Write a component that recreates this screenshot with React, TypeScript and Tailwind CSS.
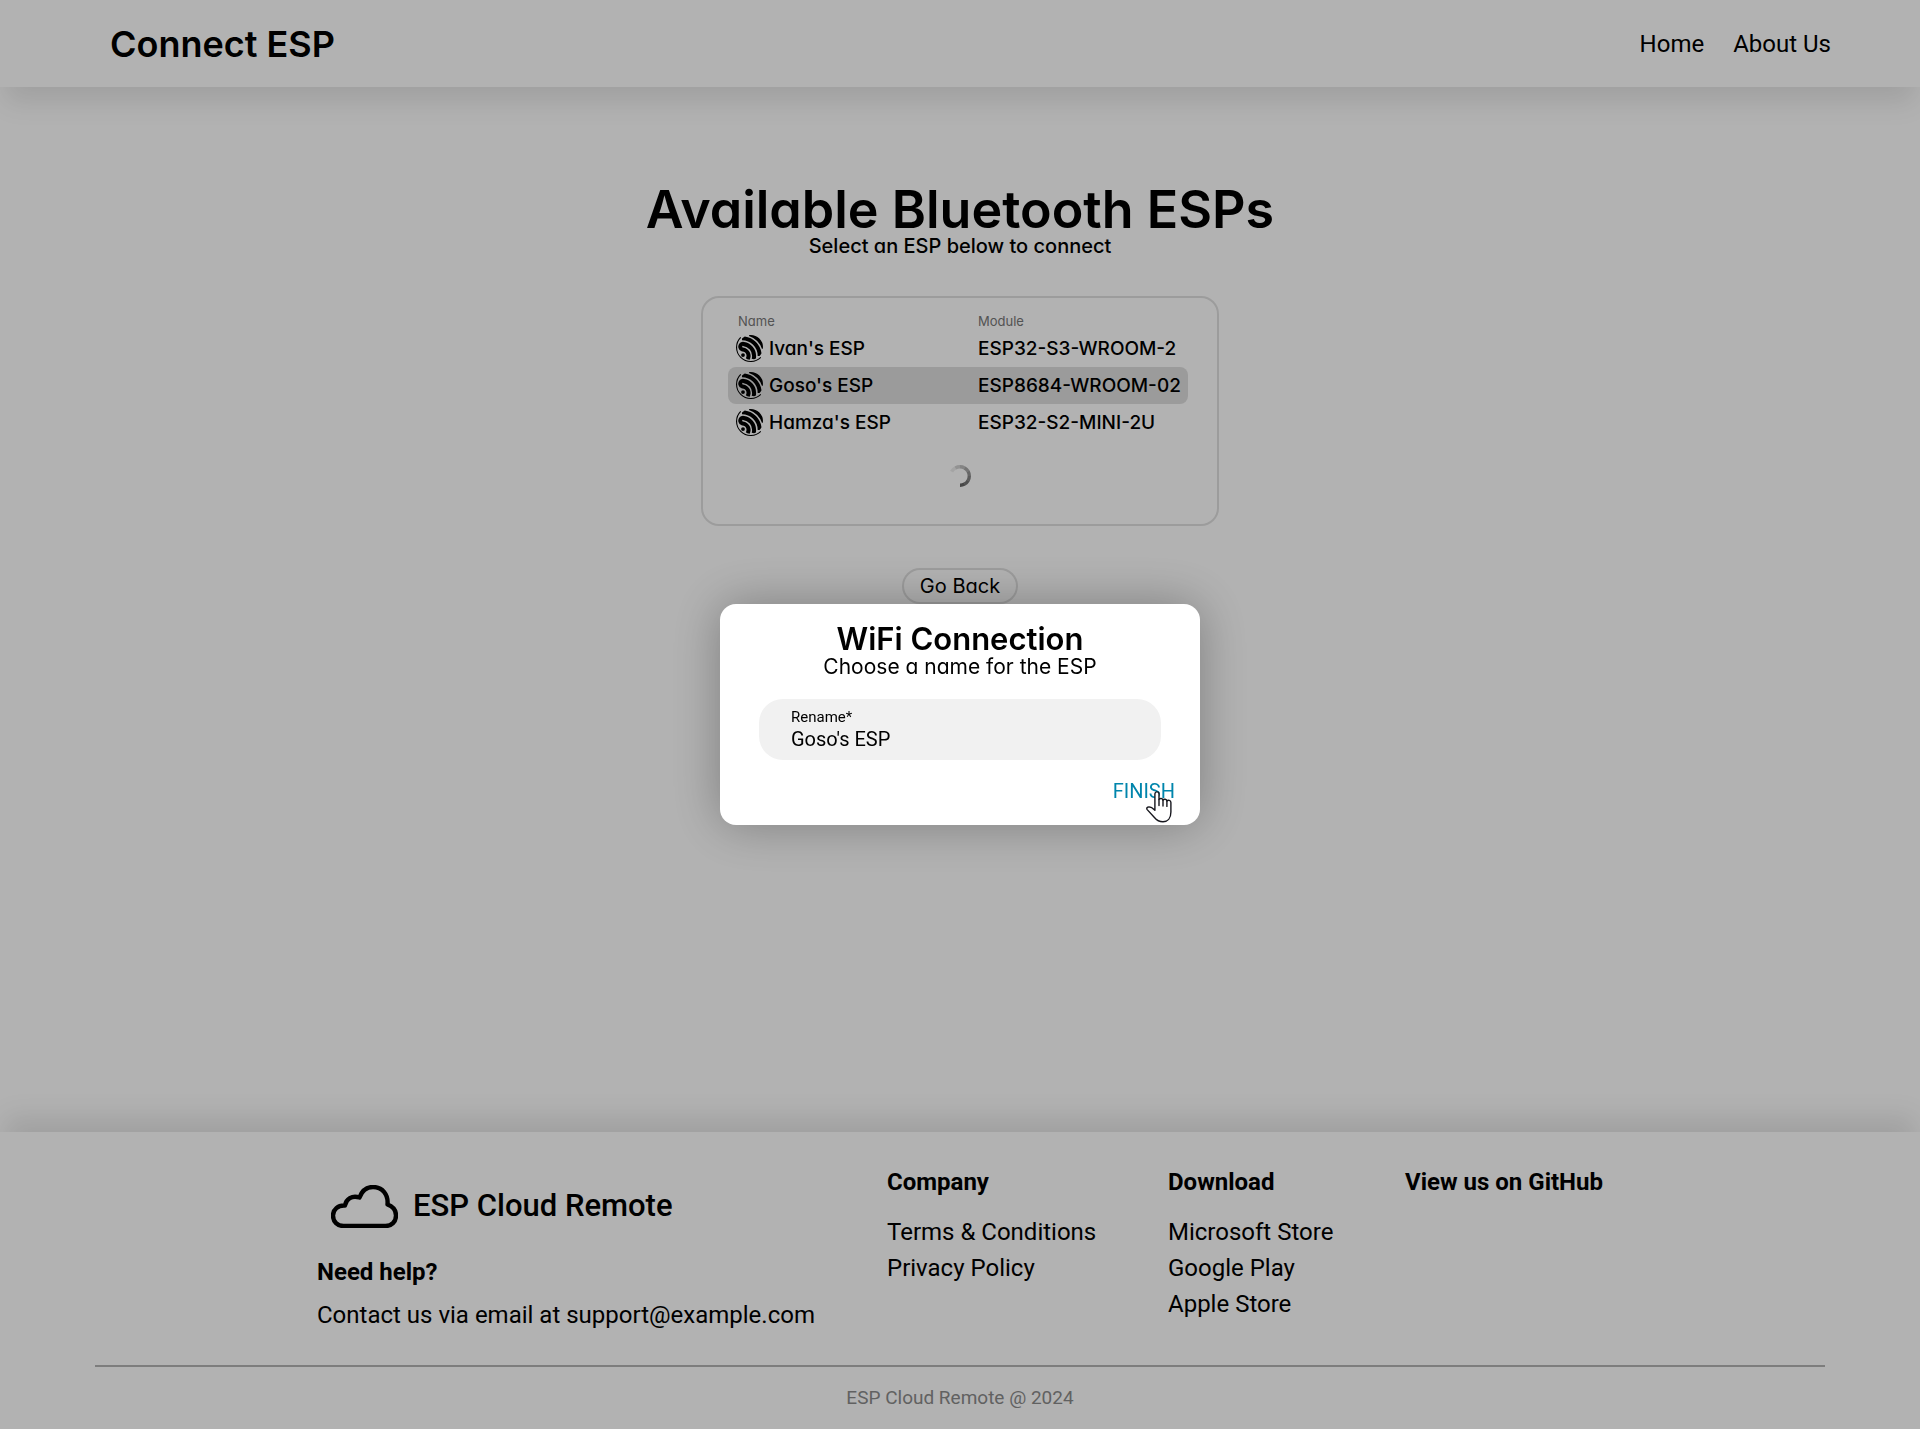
import { SiEspressif } from "react-icons/si";

const display =
  "font-['Inter','Open_Sans',sans-serif] [font-feature-settings:'cv11']";

const devices = [
  { name: "Ivan's ESP", module: "ESP32-S3-WROOM-2", selected: false },
  { name: "Goso's ESP", module: "ESP8684-WROOM-02", selected: true },
  { name: "Hamza's ESP", module: "ESP32-S2-MINI-2U", selected: false },
];

const linkColumns = [
  {
    title: "Company",
    links: ["Terms & Conditions", "Privacy Policy"],
  },
  {
    title: "Download",
    links: ["Microsoft Store", "Google Play", "Apple Store"],
  },
  { title: "View us on GitHub", links: [] as string[] },
];

function CloudLogo() {
  return (
    <svg viewBox="0 0 67 43" className="h-[43px] w-[67px]" aria-hidden="true">
      <path
        d="M12.5 41C6.5 41 2 37 2 30.5C2 24.5 7 20 14 20.5C15 14 21 10 28.5 12.5C31 5.5 36 2 42 2C51 2 57.5 9 56.5 19.5C62 21.5 65 25.5 65 30.5C65 37 60.5 41 54.5 41Z"
        fill="none"
        stroke="#000"
        strokeWidth="4.4"
        strokeLinejoin="round"
      />
    </svg>
  );
}

function HandCursor() {
  return (
    <svg
      viewBox="0 0 26 32"
      className="pointer-events-none absolute top-[15px] left-[33px] h-8 w-[26px]"
      aria-hidden="true"
    >
      <path
        d="M8.9 19.2V3C8.9 0.2 13 0.2 13 3V8.6C13.6 7 16.8 7.2 17 9.2C17.8 7.7 20.6 8 20.9 10C22 8.7 24.9 9.2 24.9 11.6V21C24.9 27.5 21.5 30.8 17 30.8C12.5 30.8 10.5 29 8.2 26.2L1.2 18.6C0.2 17.2 1.2 16 3 15.9C5.2 15.9 7.2 17.6 8.9 19.2Z"
        fill="#fff"
        stroke="#16161d"
        strokeWidth="1.4"
        strokeLinejoin="round"
      />
      <path
        d="M13 8.6V14.6M17 9.2V15M20.9 10V15.4"
        stroke="#16161d"
        strokeWidth="1.4"
        strokeLinecap="round"
      />
    </svg>
  );
}

function Header() {
  return (
    <header className="flex h-[87px] items-center justify-between bg-white pr-[89px] pl-[110px] shadow-[0_20px_25px_-5px_rgba(0,0,0,0.1)]">
      <h1 className={`${display} text-4xl leading-none font-semibold`}>
        Connect ESP
      </h1>
      <nav className="flex gap-[29px] text-2xl">
        <a href="#home">Home</a>
        <a href="#about">About Us</a>
      </nav>
    </header>
  );
}

function DeviceCard() {
  return (
    <section className="mt-10 rounded-[18px] border-2 border-[#e0e0e0] pt-[15px] pr-[29px] pb-[37px] pl-[25px]">
      <table className={`${display} w-[460px] table-fixed border-collapse text-left`}>
        <thead>
          <tr className="text-[13px] leading-[17px] text-[#777]">
            <th className="w-[242px] pl-[10px] font-normal">Name</th>
            <th className="pl-2 font-normal">Module</th>
          </tr>
        </thead>
        <tbody>
          {devices.map((d) => (
            <tr
              key={d.name}
              className={`h-[37px] text-[19px] leading-7 font-medium ${d.selected ? "bg-[#dfdfdf]" : ""}`}
            >
              <td className="rounded-l-lg pl-2">
                <span className="flex items-center gap-[6px]">
                  <SiEspressif className="size-[27px] shrink-0" />
                  {d.name}
                </span>
              </td>
              <td className="rounded-r-lg pl-2 whitespace-nowrap">{d.module}</td>
            </tr>
          ))}
        </tbody>
      </table>
      <div className="mt-6 flex justify-center pl-1" role="status" aria-label="Searching for devices">
        <svg viewBox="0 0 22 22" className="size-[22px]" fill="none" strokeWidth="3.4">
          <path d="M2.6 6.6A9.3 9.3 0 0 1 6.4 2.9" stroke="#000" strokeOpacity="0.08" />
          <path d="M6.4 2.9A9.3 9.3 0 0 1 11 1.7" stroke="#000" strokeOpacity="0.18" />
          <path d="M11 1.7A9.3 9.3 0 0 1 15.6 2.9" stroke="#000" strokeOpacity="0.26" />
          <path d="M15.6 2.9A9.3 9.3 0 0 1 19.1 6.4" stroke="#000" strokeOpacity="0.34" />
          <path d="M19.1 6.4A9.3 9.3 0 0 1 20.3 11" stroke="#000" strokeOpacity="0.42" />
          <path d="M20.3 11A9.3 9.3 0 0 1 19.1 15.6" stroke="#000" strokeOpacity="0.48" />
          <path d="M19.1 15.6A9.3 9.3 0 0 1 15.6 19.1" stroke="#000" strokeOpacity="0.54" />
          <path d="M15.6 19.1A9.3 9.3 0 0 1 11 20.3" stroke="#000" strokeOpacity="0.6" />
        </svg>
      </div>
    </section>
  );
}

function Footer() {
  return (
    <footer className="bg-white px-[95px] shadow-[0_-20px_25px_-5px_rgba(0,0,0,0.1)]">
      <div className="flex h-[233px] pl-[222px] text-2xl">
        <div className="w-[570px] pt-[50px]">
          <div className="flex items-center gap-[15px] pl-[14px]">
            <CloudLogo />
            <p className="text-[31px] leading-[48px] font-medium">
              ESP Cloud Remote
            </p>
          </div>
          <p className="mt-6 leading-9 font-bold">Need help?</p>
          <p className="mt-[7px] leading-9">
            Contact us via email at support@example.com
          </p>
        </div>
        <div className="grid grid-cols-[281px_237px_auto] pt-8">
          {linkColumns.map((c) => (
            <div key={c.title}>
              <h3 className="leading-9 font-bold">{c.title}</h3>
              <ul className="mt-[14px]">
                {c.links.map((l) => (
                  <li key={l} className="leading-9">
                    <a href="#more">{l}</a>
                  </li>
                ))}
              </ul>
            </div>
          ))}
        </div>
      </div>
      <p className="border-t-2 border-[#b4b4b4] pt-[17px] pb-[17px] text-center text-[19px] leading-7 text-[#8c8c8c]">
        ESP Cloud Remote @ 2024
      </p>
    </footer>
  );
}

function RenameDialog() {
  return (
    <div className="fixed inset-0 flex items-center justify-center bg-black/30">
      <div
        role="dialog"
        aria-labelledby="dialog-title"
        className="flex w-[480px] flex-col rounded-2xl bg-white px-[39px] pt-[17px] pb-[19px] shadow-[0_0_50px_rgba(0,0,0,0.3)]"
      >
        <div className={`${display} text-center`}>
          <h2 id="dialog-title" className="text-[31px] leading-9 font-semibold">
            WiFi Connection
          </h2>
          <p className="text-[21px] leading-5">Choose a name for the ESP</p>
        </div>
        <div className="mt-[22px] flex flex-col rounded-3xl bg-[#f1f1f1] px-8 pt-[9px] pb-2">
          <label htmlFor="rename" className="text-[15px] leading-[18px]">
            Rename*
          </label>
          <input
            id="rename"
            defaultValue="Goso's ESP"
            className="h-[26px] w-full bg-transparent text-xl outline-none"
          />
        </div>
        <div className="relative mt-4 -mr-[14px] self-end">
          <button className="block text-xl leading-[30px] text-[#0085ac]">
            FINISH
          </button>
          <HandCursor />
        </div>
      </div>
    </div>
  );
}

export default function App() {
  return (
    <div className="flex min-h-screen flex-col bg-white font-['Roboto',sans-serif] text-black">
      <Header />
      <main className="flex flex-1 flex-col items-center pt-[97px]">
        <h2 className={`${display} text-[52px] leading-[52px] font-semibold`}>
          Available Bluetooth ESPs
        </h2>
        <p className={`${display} text-xl leading-5 font-medium`}>
          Select an ESP below to connect
        </p>
        <DeviceCard />
        <button
          className={`${display} mt-[42px] h-9 rounded-full border-2 border-[#e0e0e0] px-4 text-xl leading-8`}
        >
          Go Back
        </button>
      </main>
      <Footer />
      <RenameDialog />
    </div>
  );
}
